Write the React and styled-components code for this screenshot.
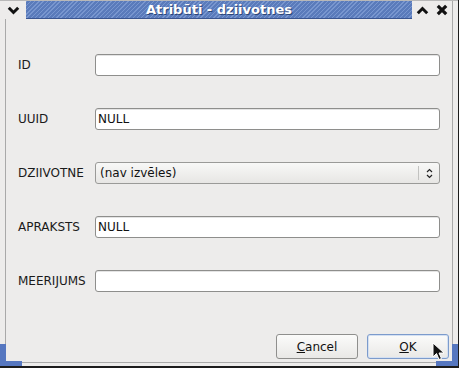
import React from "react";
import styled, { createGlobalStyle } from "styled-components";

const GlobalStyle = createGlobalStyle`
	html, body {
		margin: 0;
		padding: 0;
		background: #edeceb;
	}
	body {
		font-family: "DejaVu Sans", "Liberation Sans", sans-serif;
		font-size: 12px;
		color: #1a1a1a;
	}
`;

const fields = [
	{ label: "ID", value: "" },
	{ label: "UUID", value: "NULL" },
	{ label: "DZIIVOTNE", combo: "(nav izvēles)" },
	{ label: "APRAKSTS", value: "NULL" },
	{ label: "MEERIJUMS", value: "" },
];

export default function App() {
	return (
		<>
			<GlobalStyle />
			<StyledWindow>
				<StyledTitleBar>
					<StyledFrameButton $width={26}>
						<Chevron down />
					</StyledFrameButton>
					<StyledTitle>Atribūti - dziivotnes</StyledTitle>
					<StyledFrameButton $width={20}>
						<Chevron />
					</StyledFrameButton>
					<StyledFrameButton $width={20}>
						<CloseGlyph />
					</StyledFrameButton>
					<StyledFrameEdge />
				</StyledTitleBar>
				<StyledBody>
					<StyledForm>
						{fields.map((f) => (
							<React.Fragment key={f.label}>
								<StyledLabel>{f.label}</StyledLabel>
								{f.combo ? (
									<StyledCombo>
										<span>{f.combo}</span>
										<StyledComboArrows>
											<UpDown />
										</StyledComboArrows>
									</StyledCombo>
								) : (
									<StyledInput defaultValue={f.value} />
								)}
							</React.Fragment>
						))}
					</StyledForm>
					<StyledButtonRow>
						<StyledButton>
							<u>C</u>ancel
						</StyledButton>
						<StyledButton $focused>
							<u>O</u>K
						</StyledButton>
					</StyledButtonRow>
					<StyledCursor>
						<svg width="14" height="20" viewBox="0 0 14 20">
							<path
								d="M1 1 L1 15 L4.5 11.5 L7 17.5 L9.5 16.5 L7 11 L12 11 Z"
								fill="#111"
								stroke="#fff"
								strokeWidth="1"
							/>
						</svg>
					</StyledCursor>
				</StyledBody>
				<StyledCorner $side="left" />
				<StyledCorner $side="right" />
			</StyledWindow>
		</>
	);
}

function Chevron({ down }) {
	return (
		<svg width="13" height="9" viewBox="0 0 13 9">
			<path
				d={down ? "M1.8 1.8 L6.5 6.5 L11.2 1.8" : "M1.8 7.2 L6.5 2.5 L11.2 7.2"}
				fill="none"
				stroke="#111"
				strokeWidth="3"
			/>
		</svg>
	);
}

function CloseGlyph() {
	return (
		<svg width="12" height="12" viewBox="0 0 12 12">
			<path d="M1.8 1.8 L10.2 10.2 M10.2 1.8 L1.8 10.2" stroke="#111" strokeWidth="3.2" />
		</svg>
	);
}

function UpDown() {
	return (
		<svg width="7" height="11" viewBox="0 0 7 11">
			<path d="M1 4 L3.5 1.5 L6 4 M1 7 L3.5 9.5 L6 7" fill="none" stroke="#222" strokeWidth="1.2" />
		</svg>
	);
}

const StyledWindow = styled.div`
	position: relative;
	width: 459px;
	height: 368px;
	box-sizing: border-box;
	background: #edeceb;
	border-right: 1px solid #1c1c1c;
	border-bottom: 2px solid #1c1c1c;
	display: flex;
	flex-direction: column;
	overflow: hidden;
`;

const StyledTitleBar = styled.div`
	display: flex;
	height: 19px;
	flex-shrink: 0;
	background: #edeceb;
	border-top: 1px solid #b8b8b8;
	box-sizing: border-box;
`;

const StyledFrameButton = styled.div`
	width: ${(p) => p.$width}px;
	display: flex;
	align-items: center;
	justify-content: center;
	background: #edeceb;
`;

const StyledFrameEdge = styled.div`
	width: 5px;
	border-left: 1px solid #a9a9a9;
`;

const StyledTitle = styled.div`
	flex: 1;
	display: flex;
	align-items: center;
	justify-content: center;
	font-family: "DejaVu Sans", sans-serif;
	font-weight: bold;
	font-size: 13px;
	color: #ffffff;
	text-shadow: 1px 1px 0 #2c4678;
	background-color: #5a7bbb;
	background-image: repeating-linear-gradient(
		135deg,
		#7896cf 0px,
		#7896cf 1px,
		#5a7bbb 1px,
		#5a7bbb 3px
	);
	border-bottom: 1px solid #3a5590;
`;

const StyledBody = styled.div`
	position: relative;
	flex: 1;
	margin: 0 5px;
	border-left: 1px solid #a9a9a9;
	border-right: 1px solid #a9a9a9;
	border-bottom: 1px solid #a9a9a9;
	margin-bottom: 3px;
	padding: 35px 12px 0 12px;
	display: flex;
	flex-direction: column;
`;

const StyledForm = styled.div`
	display: grid;
	grid-template-columns: 77px 1fr;
	grid-auto-rows: 22px;
	row-gap: 32px;
	align-items: center;
`;

const StyledLabel = styled.label`
	font-size: 12px;
	color: #1a1a1a;
	white-space: nowrap;
`;

const StyledInput = styled.input`
	box-sizing: border-box;
	height: 22px;
	width: 100%;
	margin: 0;
	border: 1px solid #8e8e8c;
	border-radius: 3px;
	background: #ffffff;
	font-family: "DejaVu Sans", sans-serif;
	font-size: 12px;
	padding: 0 2px;
	color: #111;
	outline: none;
	box-shadow: inset 0 1px 0 #e4e4e4;
`;

const StyledCombo = styled.div`
	box-sizing: border-box;
	height: 22px;
	display: flex;
	align-items: center;
	justify-content: space-between;
	border: 1px solid #9a9a98;
	border-radius: 3px;
	background: linear-gradient(#f8f8f7, #e7e6e4);
	padding-left: 4px;
	font-size: 12px;
	color: #111;
`;

const StyledComboArrows = styled.div`
	height: 14px;
	width: 20px;
	display: flex;
	align-items: center;
	justify-content: center;
	border-left: 1px solid #c2c2c0;
`;

const StyledButtonRow = styled.div`
	display: flex;
	justify-content: flex-end;
	gap: 9px;
	margin-top: 42px;
	margin-right: -9px;
`;

const StyledButton = styled.button`
	width: 82px;
	height: 25px;
	box-sizing: border-box;
	border: 1px solid ${(p) => (p.$focused ? "#7c9bcc" : "#8f8f8d")};
	border-radius: 3px;
	background: linear-gradient(#fbfbfa, #e9e8e6);
	font-family: "DejaVu Sans", sans-serif;
	font-size: 12px;
	color: #111;
	padding: 0;
	box-shadow: ${(p) => (p.$focused ? "inset 0 0 0 1px #d4e0f2" : "none")};
`;

const StyledCursor = styled.div`
	position: absolute;
	left: 426px;
	top: 323px;
	line-height: 0;
`;

const StyledCorner = styled.div`
	position: absolute;
	bottom: 0;
	${(p) => (p.$side === "left" ? "left: 0;" : "right: 0;")}
	width: 22px;
	height: 22px;
	box-sizing: border-box;
	border-bottom: 5px solid #5677c0;
	${(p) =>
		p.$side === "left"
			? "border-left: 6px solid #5677c0;"
			: "border-right: 6px solid #5677c0;"}
	pointer-events: none;
`;
